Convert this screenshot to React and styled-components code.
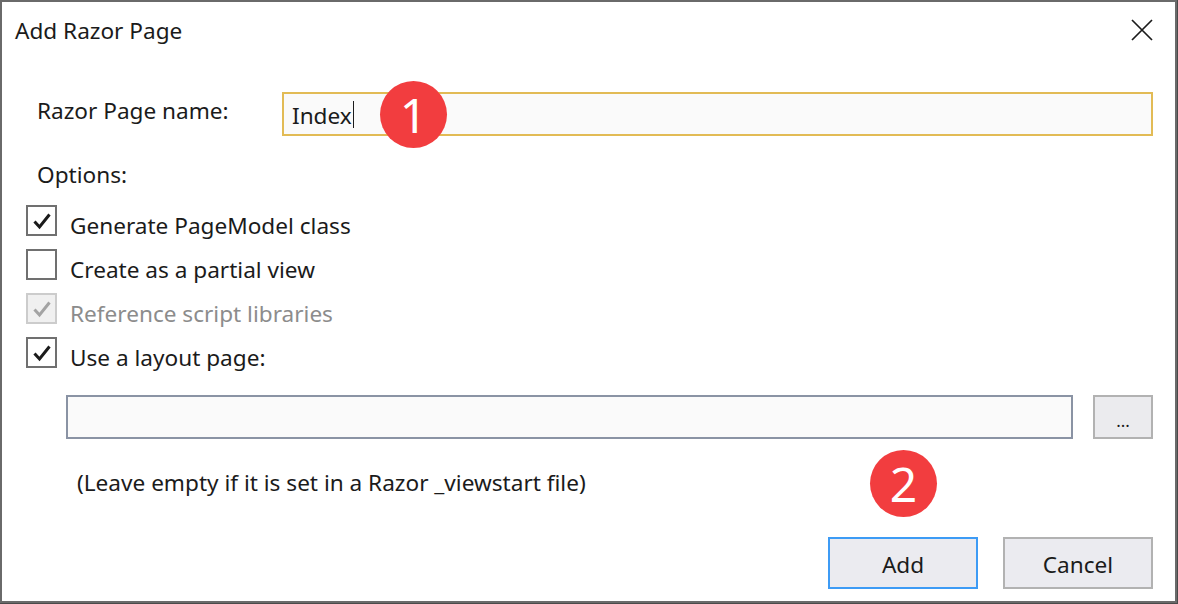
import React from 'react';
import styled, { createGlobalStyle } from 'styled-components';

const GlobalStyle = createGlobalStyle`
  html, body {
    margin: 0;
    padding: 0;
    background: #4a4a4a;
  }
  body {
    font-family: "Noto Sans", "Open Sans", sans-serif;
    color: #1b1b1b;
  }
`;

const Dialog = styled.div`
  position: relative;
  box-sizing: border-box;
  width: 1177px;
  height: 603px;
  background: #ffffff;
  border: 2px solid #6a6a6a;
  display: flex;
  flex-direction: column;
`;

const TitleBar = styled.div`
  height: 56px;
  display: flex;
  align-items: center;
  justify-content: space-between;
  padding: 0 22px 0 13px;
`;

const Title = styled.h1`
  margin: 0;
  font-size: 22.6px;
  font-weight: 400;
  padding-top: 1px;
`;

const CloseButton = styled.button`
  width: 22px;
  height: 22px;
  padding: 0;
  border: none;
  background: transparent;
  display: flex;
  align-items: center;
  justify-content: center;
  cursor: pointer;
`;

const Body = styled.div`
  flex: 1;
  display: flex;
  flex-direction: column;
  padding: 34px 22px 0 24px;
`;

const NameRow = styled.div`
  display: flex;
  align-items: flex-start;
`;

const Label = styled.label`
  font-size: 22.6px;
  line-height: 28px;
  margin-left: 11px;
  width: 245px;
  margin-top: ${({ $top }) => $top || 0}px;
`;

const TextBox = styled.div`
  box-sizing: border-box;
  flex: 1;
  height: 44px;
  background: #fafafa;
  border: 2px solid ${({ $focus }) => ($focus ? '#e2bb55' : '#8a93a4')};
  display: flex;
  align-items: center;
  padding: 3px 0 0 8px;
  font-size: 22.6px;
`;

const Caret = styled.span`
  display: inline-block;
  width: 1px;
  height: 27px;
  background: #1b1b1b;
  margin: -3px 0 0 1px;
`;

const SectionLabel = styled.div`
  font-size: 22.6px;
  line-height: 28px;
  margin: 25px 0 0 11px;
`;

const OptionList = styled.div`
  display: flex;
  flex-direction: column;
  gap: 13px;
  margin-top: 16px;
`;

const OptionRow = styled.div`
  display: flex;
  align-items: center;
  height: 31px;
  color: ${({ $disabled }) => ($disabled ? '#8c8c8c' : '#1b1b1b')};
  font-size: 22.6px;
`;

const Box = styled.span`
  box-sizing: border-box;
  width: 31px;
  height: 31px;
  border: 2px solid ${({ $disabled }) => ($disabled ? '#cccccc' : '#707070')};
  background: ${({ $disabled }) => ($disabled ? '#f0f0f0' : '#ffffff')};
  display: flex;
  align-items: center;
  justify-content: center;
  margin-right: 13px;
  flex-shrink: 0;
`;

const OptionText = styled.span`
  padding-top: 9px;
`;

const LayoutRow = styled.div`
  display: flex;
  margin: 27px 0 0 40px;
  gap: 20px;
`;

const BrowseButton = styled.button`
  box-sizing: border-box;
  width: 60px;
  height: 44px;
  background: #ebebee;
  border: 2px solid #b2b2b2;
  font-family: inherit;
  font-size: 17px;
  color: #1b1b1b;
  padding: 6px 0 0;
`;

const Hint = styled.div`
  font-size: 22.6px;
  line-height: 28px;
  margin: 30px 0 0 51px;
`;

const Footer = styled.div`
  display: flex;
  justify-content: flex-end;
  gap: 25px;
  margin-top: auto;
  padding-bottom: 12px;
`;

const DialogButton = styled.button`
  box-sizing: border-box;
  width: 150px;
  height: 52px;
  background: #ebebf0;
  border: 2px solid ${({ $primary }) => ($primary ? '#3d9bf5' : '#b2b2b2')};
  font-family: inherit;
  font-size: 22.6px;
  color: #1b1b1b;
  padding: 3px 0 0;
`;

const Badge = styled.div`
  position: absolute;
  left: ${({ $x }) => $x}px;
  top: ${({ $y }) => $y}px;
  width: 67px;
  height: 67px;
  border-radius: 50%;
  background: #f23d3f;
  color: #ffffff;
  font-family: "Noto Sans", "Open Sans", sans-serif;
  font-size: 48px;
  line-height: 67px;
  text-align: center;
`;

const CheckMark = ({ color }) => (
  <svg width="20" height="18" viewBox="0 0 20 18">
    <path d="M2.5 9.5 L7.5 15 L17.5 2.5" fill="none" stroke={color} strokeWidth="3" strokeLinejoin="miter" />
  </svg>
);

const options = [
  { label: 'Generate PageModel class', checked: true },
  { label: 'Create as a partial view', checked: false },
  { label: 'Reference script libraries', checked: true, disabled: true },
  { label: 'Use a layout page:', checked: true },
];

export default function App() {
  return (
    <>
      <GlobalStyle />
      <Dialog>
        <TitleBar>
          <Title>Add Razor Page</Title>
          <CloseButton aria-label="Close">
            <svg width="22" height="22" viewBox="0 0 22 22">
              <path d="M1 1 L21 21 M21 1 L1 21" stroke="#1b1b1b" strokeWidth="1.7" />
            </svg>
          </CloseButton>
        </TitleBar>
        <Body>
          <NameRow>
            <Label $top={5}>Razor Page name:</Label>
            <TextBox $focus>
              Index<Caret />
            </TextBox>
          </NameRow>
          <SectionLabel>Options:</SectionLabel>
          <OptionList>
            {options.map((o) => (
              <OptionRow key={o.label} $disabled={o.disabled}>
                <Box $disabled={o.disabled}>
                  {o.checked && <CheckMark color={o.disabled ? '#a3a3a3' : '#1b1b1b'} />}
                </Box>
                <OptionText>{o.label}</OptionText>
              </OptionRow>
            ))}
          </OptionList>
          <LayoutRow>
            <TextBox />
            <BrowseButton>...</BrowseButton>
          </LayoutRow>
          <Hint>(Leave empty if it is set in a Razor _viewstart file)</Hint>
          <Footer>
            <DialogButton $primary>Add</DialogButton>
            <DialogButton>Cancel</DialogButton>
          </Footer>
        </Body>
        <Badge $x={378} $y={79}>1</Badge>
        <Badge $x={868} $y={448}>2</Badge>
      </Dialog>
    </>
  );
}
